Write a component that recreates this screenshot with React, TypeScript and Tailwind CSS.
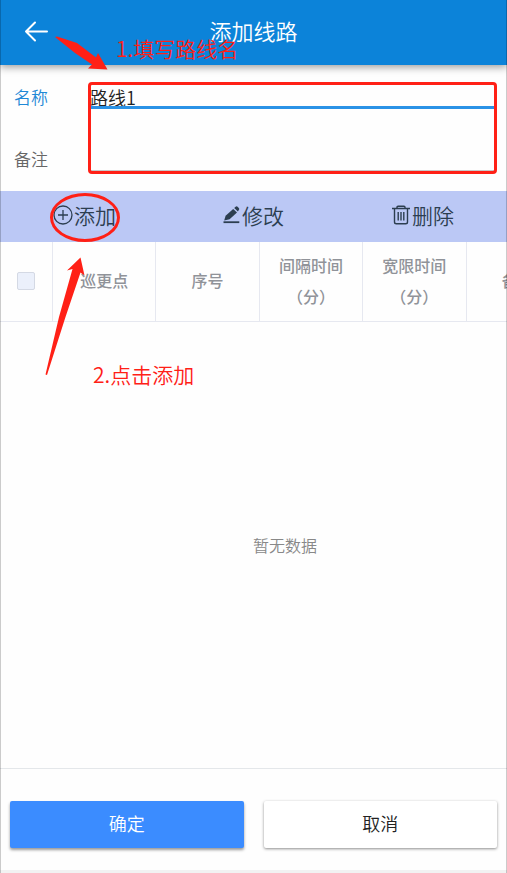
import React from 'react';

const columns = [
    { key: 'point', lines: ['巡更点'] },
    { key: 'order', lines: ['序号'] },
    { key: 'interval', lines: ['间隔时间', '（分）'] },
    { key: 'grace', lines: ['宽限时间', '（分）'] },
    { key: 'remark', lines: ['备注'] },
];

function AddIcon() {
    return (
        <svg width="20" height="20" viewBox="0 0 20 20" fill="none" stroke="currentColor" strokeWidth="1.3" aria-hidden="true">
            <circle cx="10" cy="10" r="9" />
            <path d="M10 5v10M5 10h10" />
        </svg>
    );
}

function EditIcon() {
    return (
        <svg width="18" height="20" viewBox="0 0 18 20" fill="currentColor" aria-hidden="true">
            <path d="M10.2 4 14 7.6 6.6 14.2 1.2 15.4 2.6 10.7z" />
            <path d="M11.2 3.1 12.6 1.8a1.5 1.5 0 0 1 2 0l1.2 1.2a1.5 1.5 0 0 1 0 2.1L14.9 6.6z" />
            <path d="M.5 16.3h15.8v1.8H.5z" />
        </svg>
    );
}

function TrashIcon() {
    return (
        <svg width="20" height="20" viewBox="0 0 20 20" fill="none" stroke="currentColor" strokeWidth="1.4" aria-hidden="true">
            <path d="M1 3.5h18M6 3.5V2.3a1 1 0 0 1 1-1h6a1 1 0 0 1 1 1v1.2M3.5 3.5V17a1.8 1.8 0 0 0 1.8 1.8h9.4a1.8 1.8 0 0 0 1.8-1.8V3.5" />
            <path d="M7.2 7v8.5M10 7v8.5M12.8 7v8.5" />
        </svg>
    );
}

function Header() {
    return (
        <header className="relative h-[65px] pb-1 grid grid-cols-[1fr_auto_1fr] items-center bg-[#0c83d9] text-white shadow-[0_2px_8px_rgba(0,0,0,0.4)]">
            <button type="button" aria-label="返回" className="ml-6 w-6 h-6">
                <svg width="24" height="24" viewBox="0 0 24 24" fill="none" stroke="currentColor" strokeWidth="2" strokeLinecap="round" strokeLinejoin="round">
                    <path d="M23 12.5H2M11 3.5l-9 9 9 9" />
                </svg>
            </button>
            <h1 className="pb-0.5 text-[22px] leading-8 font-[350]">添加线路</h1>
        </header>
    );
}

function RouteForm() {
    return (
        <div className="relative pt-[17px] pb-5 pl-3.5 pr-3">
            <div className="flex flex-col gap-[35px]">
                <div className="flex h-[27px]">
                    <label htmlFor="name" className="w-[76px] text-[17px] leading-[30px] font-[350] text-[#1f88d6]">名称</label>
                    <input id="name" defaultValue="路线1" className="min-w-0 flex-1 pt-1.5 text-lg leading-5 font-[350] text-[#222] border-b-3 border-[#2a92e6] outline-none" />
                </div>
                <div className="flex h-[27px]">
                    <label htmlFor="remark" className="w-[76px] text-[17px] leading-[30px] font-[350] text-[#666]">备注</label>
                    <input id="remark" className="min-w-0 flex-1 pt-1.5 text-lg leading-5 font-[350] text-[#222] border-b border-[#c8c8c8] outline-none" />
                </div>
            </div>
            <div className="absolute left-[88px] right-2.5 top-[17px] bottom-[17px] border-3 border-[#ff2016] rounded-sm pointer-events-none" />
        </div>
    );
}

function Toolbar() {
    return (
        <div className="h-[51px] grid grid-cols-3 bg-[#bbc8f5] text-[#2c3e50] text-[21px] leading-7 font-[350]">
            <button type="button" className="relative flex items-center justify-center gap-px pb-1">
                <AddIcon />添加
                <span className="absolute top-0.5 left-1/2 -translate-x-1/2 w-[70px] h-[49px] rounded-[50%] border-3 border-[#ff2016]" />
            </button>
            <button type="button" className="flex items-center justify-center gap-px pb-1">
                <EditIcon />修改
            </button>
            <button type="button" className="flex items-center justify-center gap-px pb-1">
                <TrashIcon />删除
            </button>
        </div>
    );
}

function PointTable() {
    return (
        <div className="flex-1 flex flex-col overflow-hidden">
            <table className="w-[570px] min-w-full table-fixed border-separate border-spacing-0">
                <thead>
                    <tr className="h-20">
                        <th className="w-[53px] pb-0.5 border-r border-b border-[#e6e8f0]">
                            <input type="checkbox" aria-label="全选" className="block mx-auto size-[18px] appearance-none rounded-xs border border-[#d4d9e4] bg-[#ebf0fb]" />
                        </th>
                        {columns.map((col) => (
                            <th key={col.key} className="pb-0.5 border-r border-b border-[#e6e8f0] text-base leading-[31px] font-medium text-[#909399]">
                                {col.lines.map((line) => (
                                    <div key={line}>{line}</div>
                                ))}
                            </th>
                        ))}
                    </tr>
                </thead>
            </table>
            <div className="flex-1 w-[570px] min-w-full flex items-center justify-center text-base font-[350] text-[#888]">暂无数据</div>
        </div>
    );
}

function Footer() {
    return (
        <footer className="border-t border-[#e4e7ea] border-b-3 border-b-[#f2f2f2] px-2.5 pt-8 pb-[22px] grid grid-cols-2 gap-5 text-lg font-[350]">
            <button type="button" className="h-[47px] pb-1 rounded-xs bg-[#3b8cff] text-white shadow-[0_2px_3px_rgba(0,0,0,0.4)]">确定</button>
            <button type="button" className="h-[47px] pb-1 rounded-xs bg-white text-[#222] shadow-[0_1px_3px_rgba(0,0,0,0.45)]">取消</button>
        </footer>
    );
}

// Step-by-step hints drawn over the screen
function Hints() {
    return (
        <div className="absolute inset-0 pointer-events-none border-x border-black/20 text-[21px] leading-7 font-[350] text-[#ff2016]">
            <svg className="absolute top-0 left-0" width="120" height="380" viewBox="0 0 120 380" fill="currentColor" aria-hidden="true">
                <path d="M54 37 56 36.5 76 43 95 57.5 97 53 106.5 69.5 87 68.5 91 64.5 74 53z" />
                <path d="M79.5 257.5 83.5 275.5 79.5 272.5 64.5 317 46 375 44.5 374.5 58 317 71.5 269 66 270.5z" />
            </svg>
            <p className="absolute left-[115px] top-[34px]">1.填写路线名</p>
            <p className="absolute left-[92px] top-[360px]">2.点击添加</p>
        </div>
    );
}

export default function App() {
    return (
        <div className="relative min-h-screen flex flex-col bg-[#fefefe] font-['Noto_Sans_CJK_SC',sans-serif]">
            <Header />
            <RouteForm />
            <Toolbar />
            <PointTable />
            <Footer />
            <Hints />
        </div>
    );
}
